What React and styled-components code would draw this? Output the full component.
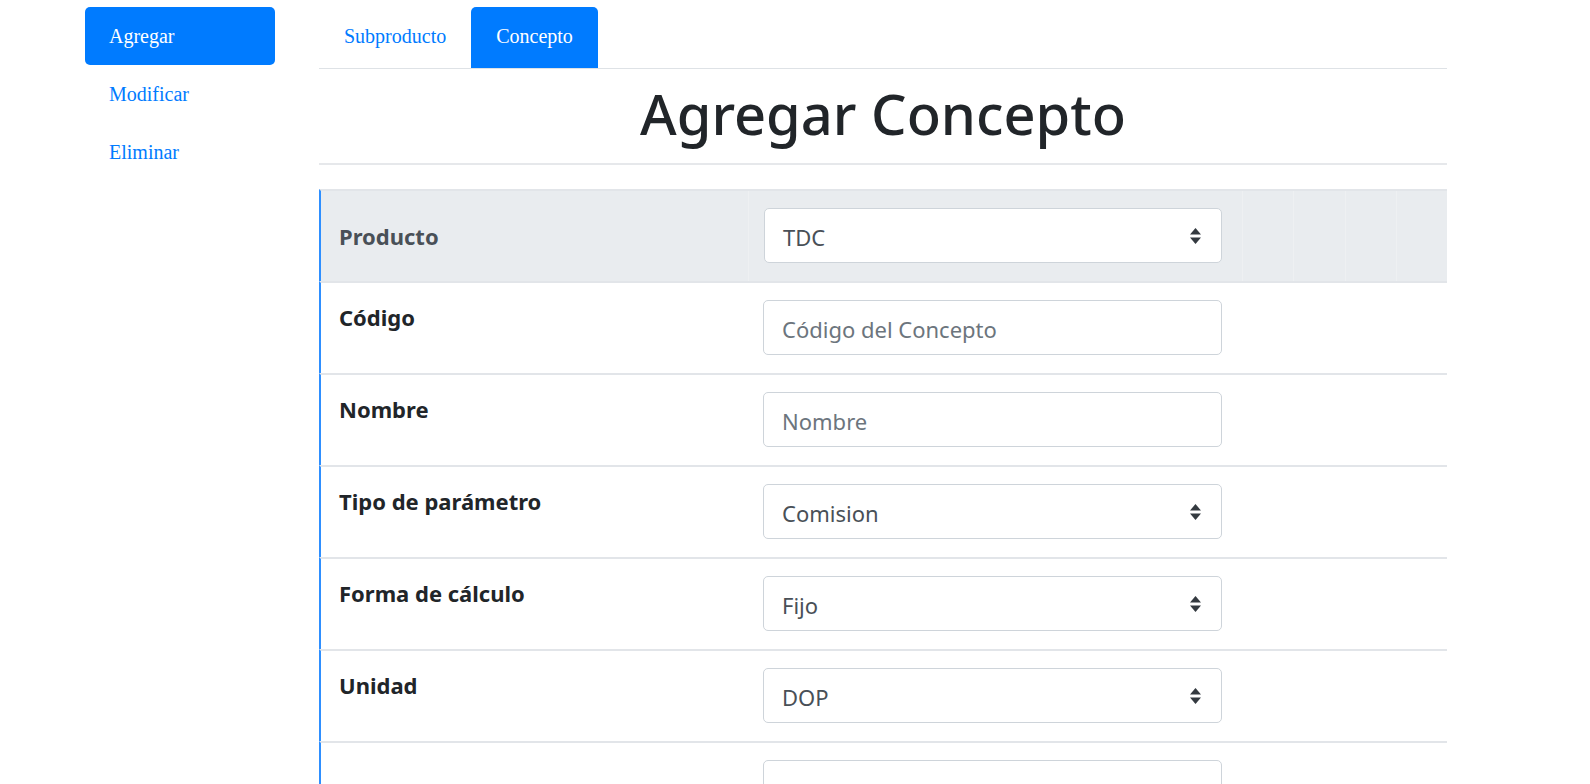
import React from 'react';
import styled, { createGlobalStyle } from 'styled-components';

const GlobalStyle = createGlobalStyle`
	html, body {
		margin: 0;
		padding: 0;
		background: #fff;
	}
	* {
		box-sizing: border-box;
	}
`;

const Page = styled.div`
	display: flex;
	align-items: flex-start;
	gap: 44px;
	padding: 7px 0 0 85px;
`;

const Sidebar = styled.nav`
	width: 190px;
	display: flex;
	flex-direction: column;
`;

const SideLink = styled.a`
	display: flex;
	align-items: center;
	height: 58px;
	padding-left: 24px;
	border-radius: 5px;
	font-family: 'Liberation Serif', 'Times New Roman', serif;
	font-size: 20px;
	text-decoration: none;
	color: ${(p) => (p.active ? '#fff' : '#007bff')};
	background: ${(p) => (p.active ? '#007bff' : 'transparent')};
`;

const Main = styled.main`
	width: 1128px;
	display: flex;
	flex-direction: column;
`;

const Tabs = styled.div`
	display: flex;
	height: 62px;
	border-bottom: 1px solid #dee2e6;
`;

const Tab = styled.a`
	display: flex;
	align-items: center;
	padding: 0 25px 2px;
	border-radius: 5px 5px 0 0;
	font-family: 'Liberation Serif', 'Times New Roman', serif;
	font-size: 20px;
	text-decoration: none;
	color: ${(p) => (p.active ? '#fff' : '#007bff')};
	background: ${(p) => (p.active ? '#007bff' : 'transparent')};
`;

const Title = styled.h1`
	margin: 0;
	padding: 8px 0 14px;
	text-align: center;
	font-family: 'Noto Sans', 'Open Sans', sans-serif;
	font-weight: 500;
	font-size: 56px;
	line-height: 72px;
	color: #212529;
	border-bottom: 2px solid #e6e8eb;
`;

const Table = styled.div`
	margin-top: 24px;
	display: flex;
	flex-direction: column;
`;

const Row = styled.div`
	display: grid;
	grid-template-columns: 374px 53px 494px repeat(4, 1fr);
	border-left: 2px solid #2e8fff;
	border-top: 2px solid #e2e5e9;
	background: ${(p) => (p.head ? '#e9ecef' : '#fff')};
	align-items: ${(p) => (p.head ? 'center' : 'start')};
`;

const Label = styled.div`
	grid-column: span 2;
	padding: ${(p) => (p.head ? '0 18px' : '19px 18px 0')};
	font-family: 'Noto Sans', 'Open Sans', sans-serif;
	font-weight: 700;
	font-size: 22px;
	line-height: 30px;
	color: ${(p) => (p.head ? '#495057' : '#212529')};
`;

const Cell = styled.div`
	padding: 17px 20px 18px 15px;
	align-self: stretch;
	border-left: ${(p) => (p.head ? '1px solid #eef0f2' : 'none')};
`;

const HeadFill = styled.div`
	align-self: stretch;
	border-left: 1px solid #eef0f2;
`;

const Field = styled.div`
	position: relative;
	height: 55px;
	display: flex;
	align-items: center;
	padding: 2px 18px 0;
	border: 1px solid #ced4da;
	border-radius: 5px;
	background: #fff;
	font-family: 'Noto Sans', 'Open Sans', sans-serif;
	font-size: 22px;
	color: ${(p) => (p.placeholder ? '#6c757d' : '#495057')};
`;

const Arrows = styled.svg`
	position: absolute;
	right: 20px;
	top: 50%;
	transform: translateY(-50%);
`;

const SelectArrows = () => (
	<Arrows width="11" height="16" viewBox="0 0 11 16">
		<path d="M5.5 0 L11 6.5 H0 Z" fill="#343a40" />
		<path d="M5.5 16 L11 9.5 H0 Z" fill="#343a40" />
	</Arrows>
);

const rows = [
	{ label: 'Código', value: 'Código del Concepto', placeholder: true },
	{ label: 'Nombre', value: 'Nombre', placeholder: true },
	{ label: 'Tipo de parámetro', value: 'Comision', select: true },
	{ label: 'Forma de cálculo', value: 'Fijo', select: true },
	{ label: 'Unidad', value: 'DOP', select: true },
	{ label: '', value: '', placeholder: true },
];

export default function App() {
	return (
		<>
			<GlobalStyle />
			<Page>
				<Sidebar>
					<SideLink active>Agregar</SideLink>
					<SideLink>Modificar</SideLink>
					<SideLink>Eliminar</SideLink>
				</Sidebar>
				<Main>
					<Tabs>
						<Tab>Subproducto</Tab>
						<Tab active>Concepto</Tab>
					</Tabs>
					<Title>Agregar Concepto</Title>
					<Table>
						<Row head>
							<Label head>Producto</Label>
							<Cell head>
								<Field>
									TDC
									<SelectArrows />
								</Field>
							</Cell>
							<HeadFill />
							<HeadFill />
							<HeadFill />
							<HeadFill />
						</Row>
						{rows.map((r, i) => (
							<Row key={i}>
								<Label>{r.label}</Label>
								<Cell>
									<Field placeholder={r.placeholder ? 1 : 0}>
										{r.value}
										{r.select && <SelectArrows />}
									</Field>
								</Cell>
							</Row>
						))}
					</Table>
				</Main>
			</Page>
		</>
	);
}
